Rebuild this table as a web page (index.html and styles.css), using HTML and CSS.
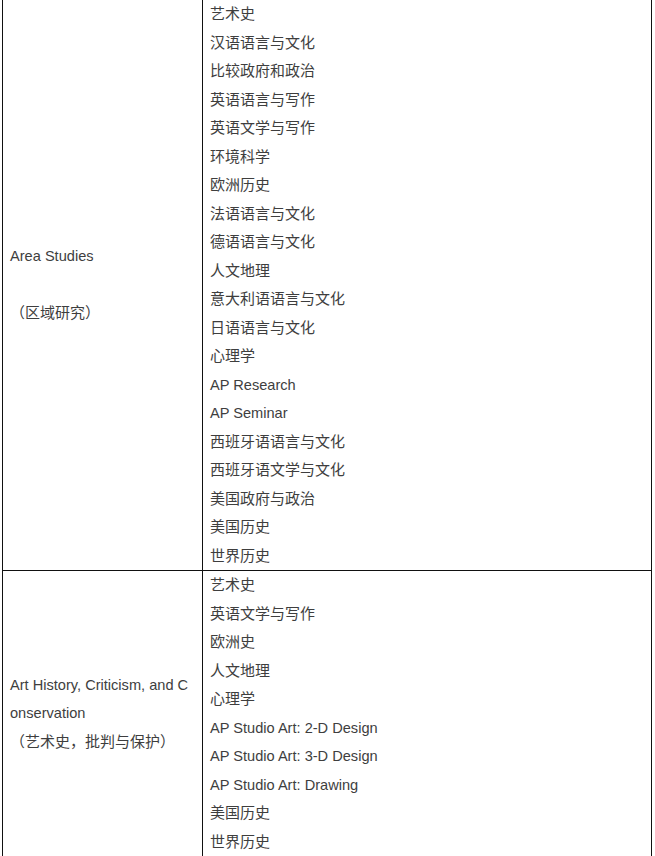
FILE: index.html
```html
<!DOCTYPE html>
<html lang="zh-CN">
<head>
<meta charset="utf-8">
<title>AP 课程</title>
<link rel="stylesheet" href="styles.css">
</head>
<body>
<table class="courses">
  <colgroup>
    <col class="col-major">
    <col class="col-list">
  </colgroup>
  <tbody>
    <tr class="first">
      <td class="major">
        <p class="en">Area Studies</p>
        <p>&nbsp;</p>
        <p>（区域研究）</p>
      </td>
      <td class="list">
        <p>艺术史</p>
        <p>汉语语言与文化</p>
        <p>比较政府和政治</p>
        <p>英语语言与写作</p>
        <p>英语文学与写作</p>
        <p>环境科学</p>
        <p>欧洲历史</p>
        <p>法语语言与文化</p>
        <p>德语语言与文化</p>
        <p>人文地理</p>
        <p>意大利语语言与文化</p>
        <p>日语语言与文化</p>
        <p>心理学</p>
        <p class="en">AP Research</p>
        <p class="en">AP Seminar</p>
        <p>西班牙语语言与文化</p>
        <p>西班牙语文学与文化</p>
        <p>美国政府与政治</p>
        <p>美国历史</p>
        <p>世界历史</p>
      </td>
    </tr>
    <tr>
      <td class="major">
        <p class="en">Art History, Criticism, and Conservation</p>
        <p>（艺术史，批判与保护）</p>
      </td>
      <td class="list">
        <p>艺术史</p>
        <p>英语文学与写作</p>
        <p>欧洲史</p>
        <p>人文地理</p>
        <p>心理学</p>
        <p class="en">AP Studio Art: 2-D Design</p>
        <p class="en">AP Studio Art: 3-D Design</p>
        <p class="en">AP Studio Art: Drawing</p>
        <p>美国历史</p>
        <p>世界历史</p>
      </td>
    </tr>
  </tbody>
</table>
</body>
</html>
```
FILE: styles.css
```css
html, body {
  margin: 0;
  padding: 0;
  background: #ffffff;
}

body {
  font-family: "Liberation Sans", Arial, "Noto Sans CJK SC", sans-serif;
  font-size: 15px;
  color: #3e3e3e;
}

.courses {
  margin-left: 2px;
  width: 650px;
  border-collapse: collapse;
  table-layout: fixed;
}

.col-major {
  width: 200px;
}

.courses td {
  border: 1px solid #111;
  padding: 0 7px;
  vertical-align: middle;
}

.courses tr.first td {
  border-top: none;
}

.courses p {
  margin: 0;
  line-height: 28.5px;
}

.courses p.en {
  font-size: 14.6px;
}

.major p {
  word-break: break-all;
}
```
